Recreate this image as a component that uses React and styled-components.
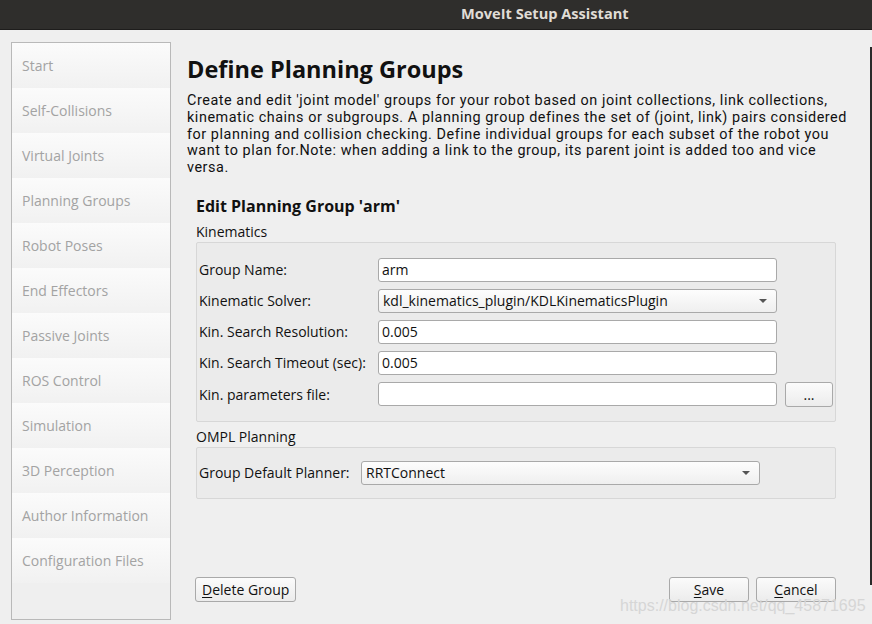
import React from 'react';
import styled, { createGlobalStyle } from 'styled-components';

const GlobalStyle = createGlobalStyle`
  html, body {
    margin: 0;
    padding: 0;
    background: #efefef;
  }
  body {
    font-family: 'Open Sans', 'DejaVu Sans', sans-serif;
    font-size: 14px;
    color: #1a1a1a;
  }
`;

const Window = styled.div`
  width: 872px;
  height: 624px;
  display: flex;
  flex-direction: column;
  overflow: hidden;
  position: relative;
  background: #efefef;
`;

const TitleBar = styled.div`
  height: 30px;
  flex: none;
  background: #2f2e2c;
  display: flex;
  align-items: center;
  padding: 0 0 4px 461px;
  font-weight: 700;
  font-size: 14.6px;
  color: #e0ddd6;
  border-bottom: 1px solid #1e1d1c;
  box-sizing: border-box;
`;

const Body = styled.div`
  flex: 1;
  display: flex;
  padding: 12px 0 0 11px;
  min-height: 0;
`;

const Sidebar = styled.div`
  width: 160px;
  height: 578px;
  flex: none;
  box-sizing: border-box;
  border: 1px solid #b9b9b9;
  display: flex;
  flex-direction: column;
  background: #efefef;
`;

const NavItem = styled.div`
  height: 45px;
  flex: none;
  display: flex;
  align-items: center;
  padding-left: 10px;
  color: #a3a3a3;
  font-size: 14px;
  background: linear-gradient(to bottom, #fbfbfb, #f1f1f1);
`;

const Main = styled.div`
  flex: 1;
  display: flex;
  flex-direction: column;
  padding: 12px 0 0 16px;
  min-width: 0;
`;

const PageTitle = styled.h1`
  margin: 0;
  font-size: 23.5px;
  line-height: 30px;
  font-weight: 700;
  color: #111;
`;

const Description = styled.p`
  margin: 9px 0 0;
  font-family: Roboto, 'Open Sans', sans-serif;
  font-size: 14.4px;
  letter-spacing: 0.55px;
  line-height: 16.8px;
  color: #111;
  white-space: nowrap;
`;

const Section = styled.div`
  display: flex;
  flex-direction: column;
  padding: 0 0 0 9px;
  width: 640px;
  flex: 1;
`;

const SectionTitle = styled.div`
  margin-top: 19px;
  font-size: 16px;
  line-height: 20px;
  font-weight: 700;
  color: #111;
`;

const GroupLabel = styled.div`
  margin-top: ${(p) => p.$top || 7}px;
  font-size: 14px;
  line-height: 17px;
  color: #111;
`;

const GroupBox = styled.div`
  margin-top: 2px;
  box-sizing: border-box;
  border: 1px solid #d7d7d7;
  border-radius: 2px;
  background: #ebebeb;
  padding: ${(p) => p.$pad || '15px 2px 14px'};
  display: grid;
  grid-template-columns: ${(p) => p.$cols};
  row-gap: 7px;
  align-items: center;
`;

const Label = styled.div`
  font-size: 14px;
  color: #111;
  white-space: nowrap;
`;

const TextInput = styled.div`
  height: 24px;
  box-sizing: border-box;
  border: 1px solid #a9a9a9;
  border-radius: 3px;
  background: #fff;
  display: flex;
  align-items: center;
  padding-left: 3px;
  font-size: 14px;
  color: #111;
`;

const Combo = styled.div`
  height: 24px;
  box-sizing: border-box;
  border: 1px solid #a9a9a9;
  border-radius: 3px;
  background: linear-gradient(to bottom, #fdfdfd, #efefef);
  display: flex;
  align-items: center;
  justify-content: space-between;
  padding: 0 9px 0 4px;
  font-size: 14px;
  color: #111;
`;

const Arrow = styled.span`
  width: 0;
  height: 0;
  border-left: 4px solid transparent;
  border-right: 4px solid transparent;
  border-top: 4px solid #555;
`;

const Button = styled.button`
  height: 25px;
  box-sizing: border-box;
  border: 1px solid #a9a9a9;
  border-radius: 3px;
  background: linear-gradient(to bottom, #fbfbfb, #ececec);
  font-family: inherit;
  font-size: 14px;
  color: #111;
  padding: 0 ${(p) => p.$padX || 4}px;
  width: ${(p) => (p.$w ? `${p.$w}px` : 'auto')};
  margin-left: ${(p) => p.$ml || 0}px;
  cursor: default;
  u {
    text-decoration: underline;
    text-underline-offset: 2px;
  }
`;

const Footer = styled.div`
  margin-top: auto;
  margin-bottom: 22px;
  margin-left: -1px;
  display: flex;
  align-items: center;
  gap: 7px;
  & > :first-child {
    margin-right: auto;
  }
`;

const Edge = styled.div`
  width: 2px;
  flex: none;
  margin-top: 5px;
  height: 538px;
  background: #2a2a2a;
`;

const Watermark = styled.div`
  position: absolute;
  left: 620px;
  top: 598px;
  font-family: 'Liberation Sans', sans-serif;
  font-size: 16px;
  line-height: 16px;
  color: #d6d6d6;
  pointer-events: none;
`;

const navItems = [
  'Start',
  'Self-Collisions',
  'Virtual Joints',
  'Planning Groups',
  'Robot Poses',
  'End Effectors',
  'Passive Joints',
  'ROS Control',
  'Simulation',
  '3D Perception',
  'Author Information',
  'Configuration Files',
];

const descLines = [
  "Create and edit 'joint model' groups for your robot based on joint collections, link collections,",
  'kinematic chains or subgroups. A planning group defines the set of (joint, link) pairs considered',
  'for planning and collision checking. Define individual groups for each subset of the robot you',
  'want to plan for.Note: when adding a link to the group, its parent joint is added too and vice',
  'versa.',
];

export default function App() {
  return (
    <Window>
      <GlobalStyle />
      <TitleBar>MoveIt Setup Assistant</TitleBar>
      <Body>
        <Sidebar>
          {navItems.map((item) => (
            <NavItem key={item}>{item}</NavItem>
          ))}
        </Sidebar>
        <Main>
          <PageTitle>Define Planning Groups</PageTitle>
          <Description>
            {descLines.map((l, i) => (
              <React.Fragment key={i}>
                {l}
                {i < descLines.length - 1 && <br />}
              </React.Fragment>
            ))}
          </Description>
          <Section>
            <SectionTitle>Edit Planning Group 'arm'</SectionTitle>
            <GroupLabel $top={7}>Kinematics</GroupLabel>
            <GroupBox $cols="179px 399px 56px" $pad="15px 2px 14px">
              <Label>Group Name:</Label>
              <TextInput>arm</TextInput>
              <span />
              <Label>Kinematic Solver:</Label>
              <Combo>
                kdl_kinematics_plugin/KDLKinematicsPlugin
                <Arrow />
              </Combo>
              <span />
              <Label>Kin. Search Resolution:</Label>
              <TextInput>0.005</TextInput>
              <span />
              <Label>Kin. Search Timeout (sec):</Label>
              <TextInput>0.005</TextInput>
              <span />
              <Label>Kin. parameters file:</Label>
              <TextInput />
              <Button $ml={8} $w={48}>...</Button>
            </GroupBox>
            <GroupLabel $top={6}>OMPL Planning</GroupLabel>
            <GroupBox $cols="162px 399px" $pad="13px 2px 13px">
              <Label>Group Default Planner:</Label>
              <Combo>
                RRTConnect
                <Arrow />
              </Combo>
            </GroupBox>
            <Footer>
              <Button $padX={6}>
                <u>D</u>elete Group
              </Button>
              <Button $w={80}>
                <u>S</u>ave
              </Button>
              <Button $w={80}>
                <u>C</u>ancel
              </Button>
            </Footer>
          </Section>
        </Main>
        <Edge />
      </Body>
      <Watermark>https://blog.csdn.net/qq_45871695</Watermark>
    </Window>
  );
}
